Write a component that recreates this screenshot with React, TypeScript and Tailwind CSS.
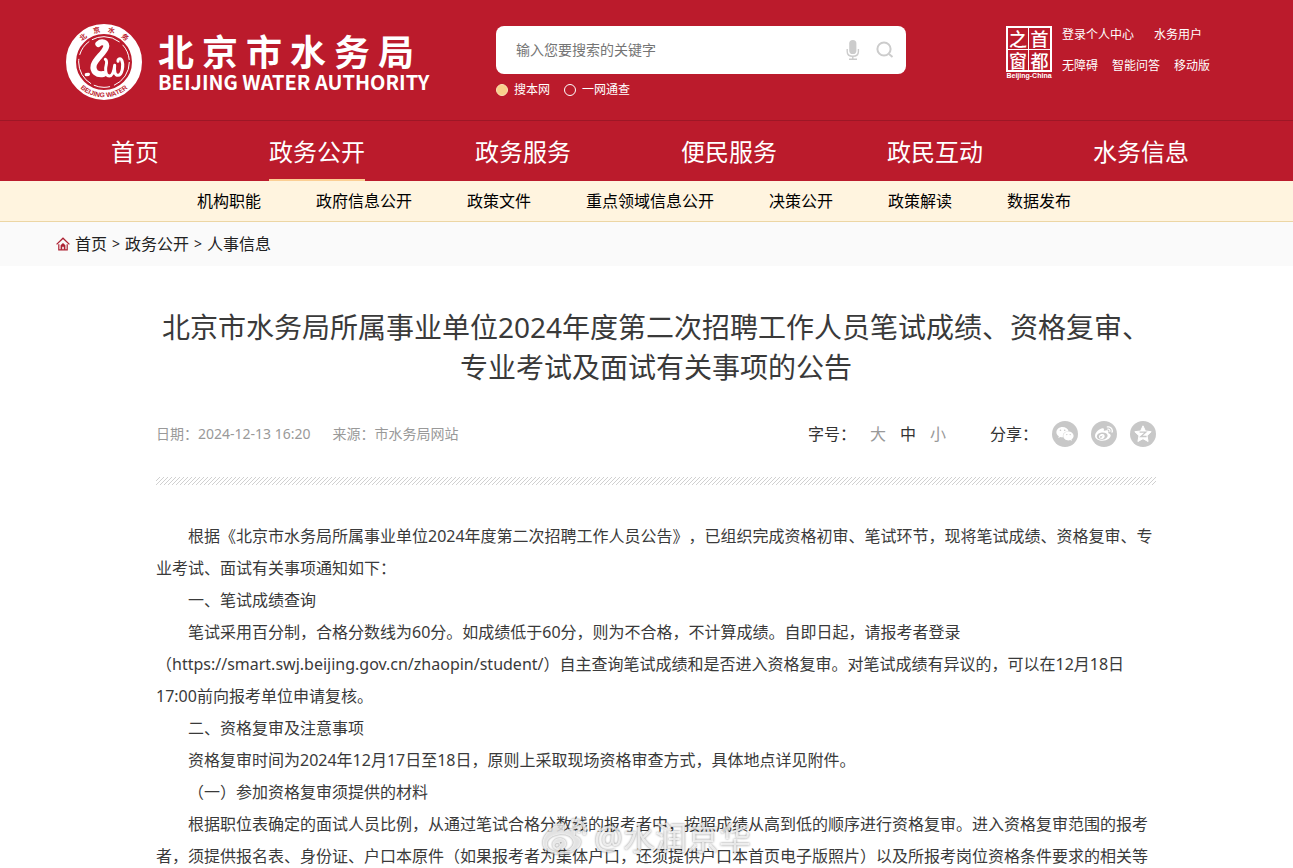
import { FaWeibo, FaWeixin } from "react-icons/fa6";

const mainNav = ["首页", "政务公开", "政务服务", "便民服务", "政民互动", "水务信息"];
const subNav = ["机构职能", "政府信息公开", "政策文件", "重点领域信息公开", "决策公开", "政策解读", "数据发布"];

const Emblem = () => (
  <svg viewBox="0 0 228 228" className="size-19 shrink-0" aria-hidden="true">
    <defs>
      <path id="ring-top" d="M24 114a90 90 0 0 1 180 0" />
      <path id="ring-bottom" d="M8 114a106 106 0 0 0 212 0" />
    </defs>
    <circle cx="114" cy="114" r="99" fill="none" stroke="#fff" strokeWidth="30" />
    <circle cx="114" cy="114" r="76" fill="none" stroke="#fff" strokeWidth="3" strokeDasharray="88 12 50 9" />
    <g fill="#bb1b2c" fontWeight="700">
      <text fontSize="21" textAnchor="middle" fontFamily="Noto Sans CJK SC, sans-serif">
        <textPath href="#ring-top" startOffset="50%">
          {"北\u3000京\u3000水\u3000务"}
        </textPath>
      </text>
      <text fontSize="20" textAnchor="middle" fontFamily="Liberation Sans, sans-serif">
        <textPath href="#ring-bottom" startOffset="50%">
          BEIJING WATER
        </textPath>
      </text>
    </g>
    <g fill="none" stroke="#fff" strokeLinecap="round" strokeLinejoin="round">
      <path d="M97 60c10-9 28-5 23 10-6 18-32 35-37 54-4 18 10 30 29 26" strokeWidth="18" />
      <path d="M118 106c8 4 2 16 1 26-1 16 3 24 11 24 10 0 14-16 16-32-2 19 1 30 10 30 13 0 18-32 11-46-4-7-12-3-11 4" strokeWidth="9" />
      <path d="M61 152l6-1" strokeWidth="10" />
    </g>
  </svg>
);

const CapitalSeal = () => (
  <a href="#" className="flex flex-col items-center">
    <span className="grid size-[46px] grid-cols-2 border-2 border-white font-['Noto_Sans_CJK_SC',sans-serif] text-lg leading-[21px] font-medium">
      <span className="border-r border-b border-white text-center">之</span>
      <span className="border-b border-white text-center">首</span>
      <span className="border-r border-white text-center">窗</span>
      <span className="text-center">都</span>
    </span>
    <span className="font-['Liberation_Sans',sans-serif] text-[7px] leading-2 font-bold">Beijing-China</span>
  </a>
);

const MicIcon = () => (
  <svg viewBox="0 0 14 20" className="h-5 w-3.5" fill="none" stroke="#ccc" strokeWidth="1.4" aria-hidden="true">
    <rect x="3.2" y="0" width="7.2" height="14" rx="3.6" fill="#ccc" stroke="none" />
    <path d="M1.2 9v2.4c0 3 2.400 4.800 5.600 4.800s5.600-1.800 5.600-4.800V9M6.800 16v3M3 19.200h8" />
  </svg>
);

const SearchIcon = () => (
  <svg viewBox="0 0 18 18" className="size-[18px]" fill="none" stroke="#ccc" strokeWidth="2" aria-hidden="true">
    <circle cx="8" cy="8" r="6.600" />
    <path d="M13 13l3.500 3" />
  </svg>
);

const QzoneIcon = () => (
  <svg viewBox="0 0 18 18" className="size-[18px]" aria-hidden="true">
    <path d="M9 .8l2.400 5.200 5.800.7-4.200 4 1.100 5.800L9 13.700l-5.100 2.800L5 10.700.8 6.700 6.600 6z" fill="#fff" stroke="#fff" strokeLinejoin="round" />
    <path d="M5.600 7.200h6.200l-5 4.300h5.800" fill="none" stroke="#c8c8c8" strokeWidth="1.300" />
  </svg>
);

const HomeIcon = () => (
  <svg viewBox="0 0 14 14" className="size-3.5" aria-hidden="true">
    <path d="M.6 7.400L7 1.200l6.400 6.200" fill="none" stroke="#ad2233" strokeWidth="1.300" />
    <path d="M2.800 7.200V12.800h8.400V7.200" fill="none" stroke="#ad2233" strokeWidth="1.200" />
    <path d="M4.600 12.800V8.200L7 6l2.400 2.200v4.600H7.800v-3H6.200v3z" fill="#ad2233" />
  </svg>
);

const Header = () => (
  <header className="flex h-[120px] items-start bg-[#bb1b2c] pl-[66px] text-white">
    <a href="#" className="flex w-[430px] shrink-0 items-center pt-6">
      <Emblem />
      <span className="ml-4 flex flex-col font-['Noto_Sans_CJK_SC',sans-serif] font-bold">
        <span className="flex gap-2 text-4xl leading-10">
          {[..."北京市水务局"].map((char) => (
            <span key={char}>{char}</span>
          ))}
        </span>
        <span className="text-xl leading-6 whitespace-nowrap">BEIJING WATER AUTHORITY</span>
      </span>
    </a>
    <form className="w-[410px] shrink-0 pt-[26px]">
      <div className="flex h-12 items-center rounded-lg bg-white px-3">
        <input
          type="text"
          aria-label="搜索"
          placeholder="输入您要搜索的关键字"
          className="min-w-0 flex-1 px-2 text-sm text-[#333] outline-none placeholder:text-[#757575]"
        />
        <button type="button" aria-label="语音搜索" className="mr-4">
          <MicIcon />
        </button>
        <button type="submit" aria-label="搜索">
          <SearchIcon />
        </button>
      </div>
      <div className="mt-2 flex items-center gap-3.5 text-xs leading-4">
        <label className="flex items-center gap-1.5">
          <input type="radio" name="scope" defaultChecked className="size-3 appearance-none rounded-full border border-white checked:border-[#fbe3b4] checked:bg-[#f9d08b]" />
          搜本网
        </label>
        <label className="flex items-center gap-1.5">
          <input type="radio" name="scope" className="size-3 appearance-none rounded-full border border-white checked:border-[#fbe3b4] checked:bg-[#f9d08b]" />
          一网通查
        </label>
      </div>
    </form>
    <div className="ml-[100px] flex shrink-0 gap-2.5 pt-[26px]">
      <CapitalSeal />
      <div className="flex flex-col gap-[15px] pt-px text-xs leading-4 whitespace-nowrap">
        <div className="flex gap-5">
          <a href="#">登录个人中心</a>
          <a href="#">水务用户</a>
        </div>
        <div className="flex gap-3.5">
          <a href="#">无障碍</a>
          <a href="#">智能问答</a>
          <a href="#">移动版</a>
        </div>
      </div>
    </div>
  </header>
);

const Navigation = () => (
  <nav>
    <div className="flex h-[61px] gap-[110px] border-t border-[#9d1726] bg-[#bb1b2c] pl-[111px] text-2xl whitespace-nowrap text-white">
      {mainNav.map((item) => (
        <a key={item} href="#" className={`border-b-2 leading-[61px] ${item === "政务公开" ? "border-[#fbcf94]" : "border-transparent"}`}>
          {item}
        </a>
      ))}
    </div>
    <div className="flex h-[41px] gap-[55px] border-b border-[#ecd6a4] bg-[#fff4df] pl-[197px] leading-10 whitespace-nowrap text-black">
      {subNav.map((item) => (
        <a key={item} href="#">
          {item}
        </a>
      ))}
    </div>
  </nav>
);

const Breadcrumb = () => (
  <div className="flex h-11 items-center bg-[#fafafa] pl-14 text-[#222]">
    <HomeIcon />
    <a href="#" className="ml-[5px]">
      首页
    </a>
    <span className="mx-[5px] text-sm">&gt;</span>
    <a href="#">政务公开</a>
    <span className="mx-[5px] text-sm">&gt;</span>
    <a href="#">人事信息</a>
  </div>
);

const MetaRow = () => (
  <div className="mt-[34px] flex h-[26px] items-center whitespace-nowrap">
    <span className="text-sm text-[#999]">日期：2024-12-13 16:20</span>
    <span className="ml-[22px] text-sm text-[#999]">来源：市水务局网站</span>
    <div className="ml-auto flex items-center text-[#333]">
      <span>字号：</span>
      <div className="ml-3.5 flex gap-3.5 text-[#999]">
        <button type="button">大</button>
        <button type="button" className="text-[#333]">
          中
        </button>
        <button type="button">小</button>
      </div>
      <span className="ml-11">分享：</span>
      <div className="ml-3.5 flex gap-[13px] text-lg text-white">
        <a href="#" aria-label="微信" className="flex size-[26px] items-center justify-center rounded-full bg-[#c8c8c8]">
          <FaWeixin />
        </a>
        <a href="#" aria-label="微博" className="flex size-[26px] items-center justify-center rounded-full bg-[#c8c8c8]">
          <FaWeibo />
        </a>
        <a href="#" aria-label="QQ空间" className="flex size-[26px] items-center justify-center rounded-full bg-[#c8c8c8]">
          <QzoneIcon />
        </a>
      </div>
    </div>
  </div>
);

const Article = () => (
  <article className="pt-[41px] pr-[137px] pl-[156px] text-[#3a3a3a]">
    <h1 className="text-center text-[28px] leading-10">
      北京市水务局所属事业单位2024年度第二次招聘工作人员笔试成绩、资格复审、专业考试及面试有关事项的公告
    </h1>
    <MetaRow />
    <div className="mt-[30px] h-2 bg-[linear-gradient(135deg,transparent_38%,#d0d0d0_38%_62%,transparent_62%)] bg-size-[4px_4px]" />
    <div className="mt-[35px] indent-8 leading-8">
      <p>根据《北京市水务局所属事业单位2024年度第二次招聘工作人员公告》，已组织完成资格初审、笔试环节，现将笔试成绩、资格复审、专业考试、面试有关事项通知如下：</p>
      <p>一、笔试成绩查询</p>
      <p>
        笔试采用百分制，合格分数线为60分。如成绩低于60分，则为不合格，不计算成绩。自即日起，请报考者登录
        <span className="whitespace-nowrap">（https://smart.swj.beijing.gov.cn/zhaopin/student/）</span>
        自主查询笔试成绩和是否进入资格复审。对笔试成绩有异议的，可以在12月18日17:00前向报考单位申请复核。
      </p>
      <p>二、资格复审及注意事项</p>
      <p>资格复审时间为2024年12月17日至18日，原则上采取现场资格审查方式，具体地点详见附件。</p>
      <p>（一）参加资格复审须提供的材料</p>
      <p>
        根据职位表确定的面试人员比例，从通过笔试合格分数线的报考者中，按照成绩从高到低的顺序进行资格复审。进入资格复审范围的报考者，须提供报名表、身份证、户口本原件（如果报考者为集体户口，还须提供户口本首页电子版照片）以及所报考岗位资格条件要求的相关等
      </p>
    </div>
  </article>
);

const Watermark = () => (
  <div className="pointer-events-none fixed bottom-2 left-1/2 flex -translate-x-1/2 items-center gap-2 whitespace-nowrap text-white/75 drop-shadow-[0_0_1px_rgba(0,0,0,0.6)]">
    <FaWeibo className="size-11" />
    <span className="text-[32px] leading-10">@水润京华</span>
  </div>
);

export default function App() {
  return (
    <div className="bg-white font-['Noto_Sans','Noto_Sans_CJK_SC',sans-serif] text-base [text-spacing-trim:space-all]" lang="zh-CN">
      <Header />
      <Navigation />
      <Breadcrumb />
      <Article />
      <Watermark />
    </div>
  );
}
